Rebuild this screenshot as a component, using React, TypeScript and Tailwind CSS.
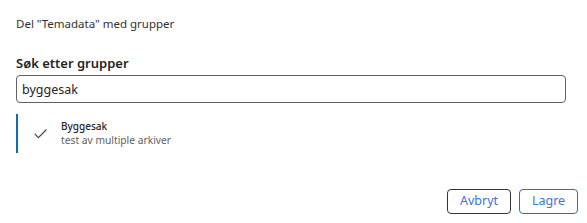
export default function App() {
  return (
    <div
      className="w-[587px] h-[223px] bg-white text-[#323130] flex flex-col"
      style={{ fontFamily: '"Segoe UI", "Noto Sans", "Open Sans", sans-serif' }}
    >
      <div className="pl-4 pr-[21px] pt-4">
        <p className="text-[11.5px] leading-4 text-[#323130]">Del "Temadata" med grupper</p>

        <label className="block mt-[21px] text-[13px] leading-5 font-semibold text-[#242424]">
          Søk etter grupper
        </label>
        <input
          defaultValue="byggesak"
          className="mt-[2px] block w-full h-[28px] rounded-[4px] border border-[#616161] px-[5px] text-[12.5px] text-[#242424] outline-none"
        />

        <div className="mt-[11px] h-[39px] border-l-2 border-[#0f6cbd] flex items-center">
          <div className="w-[43px] flex justify-center pl-[2px]">
            <svg width="13" height="10" viewBox="0 0 13 10" fill="none">
              <path d="M1 5.2 L4.4 8.6 L12 1" stroke="#424242" strokeWidth="1.2" strokeLinecap="round" strokeLinejoin="round" />
            </svg>
          </div>
          <div className="flex flex-col">
            <span className="text-[10px] leading-[14px] font-medium text-[#242424]">Byggesak</span>
            <span className="text-[10.25px] leading-[15px] text-[#616161]">test av multiple arkiver</span>
          </div>
        </div>
      </div>

      <div className="mt-[36px] flex justify-end gap-2 pr-[9px]">
        <button className="w-[64px] h-[25px] rounded-[4px] border border-[#333] text-[12.5px] text-[#3b74d6] bg-white">
          Avbryt
        </button>
        <button className="w-[59px] h-[25px] rounded-[4px] border border-[#1a73d0] text-[12.5px] text-[#3b74d6] bg-white">
          Lagre
        </button>
      </div>
    </div>
  );
}
